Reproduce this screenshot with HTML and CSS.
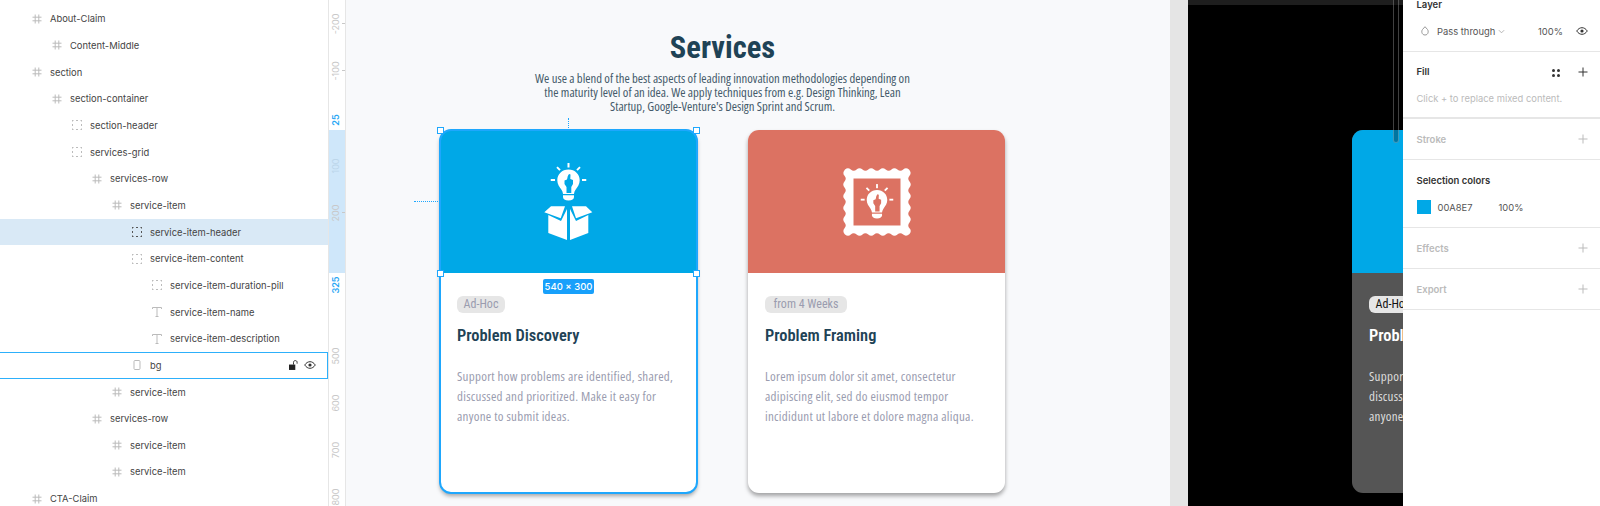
FILE: index.html
```html
<!DOCTYPE html>
<html>
<head lang="en">
    <meta charset="UTF-8">
    <title>Services</title>
    <link rel="stylesheet" href="styles.css">
</head>
<body>
<svg class="defs" width="0" height="0">
    <symbol id="i-frame" viewBox="0 0 10 10">
        <path d="M3.2 .5V9.5M6.8 .5V9.5M.5 3.2H9.5M.5 6.8H9.5" fill="none" stroke="currentColor"/>
    </symbol>
    <symbol id="i-group" viewBox="0 0 10 10">
        <path d="M.5 0V1.5M0 .5H1.5M4 .5H6M8.5 .5H10M9.5 0V1.5M.5 4V6M9.5 4V6M.5 8.5V10M0 9.5H1.5M4 9.5H6M8.5 9.5H10M9.5 8.5V10" fill="none" stroke="currentColor"/>
    </symbol>
    <symbol id="i-text" viewBox="0 0 10 10">
        <path d="M.5 2V.5H9.5V2M5 .5V9.5M3.5 9.5H6.5" fill="none" stroke="currentColor"/>
    </symbol>
    <symbol id="i-rect" viewBox="0 0 10 10">
        <rect x="2" y=".5" width="6" height="9" rx="1" fill="none" stroke="currentColor"/>
    </symbol>
    <symbol id="i-eye" viewBox="0 0 12 8">
        <path d="M.7 4C2.2 1.8 4 .7 6 .7S9.8 1.8 11.3 4C9.8 6.2 8 7.3 6 7.3S2.2 6.2 .7 4Z" fill="none" stroke="currentColor"/>
        <circle cx="6" cy="4" r="1.6" fill="currentColor"/>
    </symbol>
    <symbol id="i-plus" viewBox="0 0 10 10">
        <path d="M5 .5V9.5M.5 5H9.5" fill="none" stroke="currentColor"/>
    </symbol>
    <symbol id="i-bulb" viewBox="0 0 36 38">
        <g fill="#fff">
            <path d="M18 6.500C11.500 6.500 6.800 11.300 6.800 17.300C6.800 21.500 9 23.800 10.800 26.500C12 28.300 12.300 29.500 12.500 31H23.500C23.700 29.500 24 28.300 25.200 26.500C27 23.800 29.200 21.500 29.200 17.300C29.200 11.300 24.500 6.500 18 6.500Z"/>
            <path d="M12.500 32.300H23.500V34C23.500 36 21.500 37.500 18 37.500S12.500 36 12.500 34Z"/>
            <rect x="17" y="0" width="2" height="4.500"/>
            <rect x="0" y="16" width="4.500" height="2"/>
            <rect x="31.500" y="16" width="4.500" height="2"/>
            <path d="M5.800 4.800L7.200 3.400L10.200 6.400L8.800 7.800Z"/>
            <path d="M30.200 4.800L28.800 3.400L25.800 6.400L27.200 7.800Z"/>
        </g>
        <path d="M18.500 11L20 11.500L19.800 16L22.500 17V21L20.800 24V30H16V24L14 21V17.500L16.500 16.500L17.300 13Z" fill="currentColor"/>
    </symbol>
</svg>

<div class="layers">
    <div class="layer d1"><svg class="ico"><use href="#i-frame"/></svg>About-Claim</div>
    <div class="layer d2"><svg class="ico"><use href="#i-frame"/></svg>Content-Middle</div>
    <div class="layer d1"><svg class="ico"><use href="#i-frame"/></svg>section</div>
    <div class="layer d2"><svg class="ico"><use href="#i-frame"/></svg>section-container</div>
    <div class="layer d3"><svg class="ico"><use href="#i-group"/></svg>section-header</div>
    <div class="layer d3"><svg class="ico"><use href="#i-group"/></svg>services-grid</div>
    <div class="layer d4"><svg class="ico"><use href="#i-frame"/></svg>services-row</div>
    <div class="layer d5"><svg class="ico"><use href="#i-frame"/></svg>service-item</div>
    <div class="layer d6 selected"><svg class="ico"><use href="#i-group"/></svg>service-item-header</div>
    <div class="layer d6"><svg class="ico"><use href="#i-group"/></svg>service-item-content</div>
    <div class="layer d7"><svg class="ico"><use href="#i-group"/></svg>service-item-duration-pill</div>
    <div class="layer d7"><svg class="ico"><use href="#i-text"/></svg>service-item-name</div>
    <div class="layer d7"><svg class="ico"><use href="#i-text"/></svg>service-item-description</div>
    <div class="layer d6 hovered">
        <svg class="ico"><use href="#i-rect"/></svg>bg
        <span class="layer-tools">
            <svg class="lock" viewBox="0 0 10 11"><path d="M0 5H7V11H0Z" fill="#222"/><path d="M5 5V2.500C5 1.300 5.900 .6 7 .6S9 1.300 9 2.500V4" fill="none" stroke="#222"/></svg>
            <svg class="eye"><use href="#i-eye"/></svg>
        </span>
    </div>
    <div class="layer d5"><svg class="ico"><use href="#i-frame"/></svg>service-item</div>
    <div class="layer d4"><svg class="ico"><use href="#i-frame"/></svg>services-row</div>
    <div class="layer d5"><svg class="ico"><use href="#i-frame"/></svg>service-item</div>
    <div class="layer d5"><svg class="ico"><use href="#i-frame"/></svg>service-item</div>
    <div class="layer d1"><svg class="ico"><use href="#i-frame"/></svg>CTA-Claim</div>
</div>

<div class="ruler">
    <div class="ruler-band"></div>
    <span class="mark tick" style="top:24px">-200</span>
    <span class="mark tick" style="top:71px">-100</span>
    <span class="mark on" style="top:120px">25</span>
    <span class="mark faded" style="top:166px">100</span>
    <span class="mark tick" style="top:213px">200</span>
    <span class="mark on" style="top:285px">325</span>
    <span class="mark" style="top:356px">500</span>
    <span class="mark" style="top:403px">600</span>
    <span class="mark" style="top:450px">700</span>
    <span class="mark" style="top:497px">800</span>
</div>

<div class="canvas">
    <div class="section">
        <div class="section-header">
            <h1>Services</h1>
            <p>We use a blend of the best aspects of leading innovation methodologies depending on<br>the maturity level of an idea. We apply techniques from e.g. Design Thinking, Lean<br>Startup, Google-Venture's Design Sprint and Scrum.</p>
        </div>
        <div class="services-row">
            <div class="card active">
                <div class="card-head blue">
                    <svg class="icon-box" viewBox="0 0 77 100">
                        <use href="#i-bulb" x="20.500" y="13" width="36" height="38" class="hand-blue"/>
                        <path fill="#fff" d="M14.300 62.300L21 56.300H35L30.700 68.300ZM42 56.300H56L62.300 62.300L46 68.300ZM18.300 65L31 71L37 59V90L18.300 83ZM58.300 65L46 71L40 59V90L58.300 83Z"/>
                    </svg>
                </div>
                <div class="card-body">
                    <span class="pill">Ad-Hoc</span>
                    <h2>Problem Discovery</h2>
                    <p>Support how problems are identified, shared,<br>discussed and prioritized. Make it easy for<br>anyone to submit ideas.</p>
                </div>
                <i class="handle tl"></i><i class="handle tr"></i><i class="handle bl"></i><i class="handle br"></i>
                <span class="size-tag">540 × 300</span>
                <i class="gap-v"></i><i class="gap-h"></i>
            </div>
            <div class="card">
                <div class="card-head coral">
                    <svg class="icon-stamp" viewBox="0 0 70 70">
                        <path fill="#fff" fill-rule="evenodd" d="M3 2.500Q5.900 0 8.800 2.500T14.600 2.500T20.500 2.500T26.300 2.500T32.100 2.500T37.900 2.500T43.700 2.500T49.500 2.500T55.400 2.500T61.200 2.500T67 2.500Q70 5.900 67.500 8.800T67.500 14.600T67.500 20.500T67.500 26.300T67.500 32.100T67.500 37.900T67.500 43.700T67.500 49.500T67.500 55.400T67.500 61.200T67.500 67Q64.100 70 61.200 67.500T55.400 67.500T49.500 67.500T43.700 67.500T37.900 67.500T32.100 67.500T26.300 67.500T20.500 67.500T14.600 67.500T8.800 67.500T3 67.500Q0 64.100 2.500 61.200T2.500 55.400T2.500 49.500T2.500 43.700T2.500 37.900T2.500 32.100T2.500 26.300T2.500 20.500T2.500 14.600T2.500 8.800T3 2.500ZM11.500 11.500V58.500H58.500V11.500Z"/>
                        <use href="#i-bulb" x="18.500" y="17" width="33" height="35" class="hand-coral"/>
                    </svg>
                </div>
                <div class="card-body">
                    <span class="pill wide">from 4 Weeks</span>
                    <h2>Problem Framing</h2>
                    <p>Lorem ipsum dolor sit amet, consectetur<br>adipiscing elit, sed do eiusmod tempor<br>incididunt ut labore et dolore magna aliqua.</p>
                </div>
            </div>
        </div>
    </div>
</div>

<div class="gutter"></div>

<div class="preview">
    <div class="preview-top"></div>
    <div class="mini-card">
        <div class="mini-head"></div>
        <div class="mini-body">
            <span class="mini-pill">Ad-Hoc</span>
            <h3>Problem</h3>
            <p>Support<br>discussed<br>anyone</p>
        </div>
    </div>
    <div class="scroll-line"></div>
</div>

<div class="inspector">
    <div class="panel">
        <div class="panel-head"><b>Layer</b></div>
        <div class="panel-row first">
            <svg class="drop" viewBox="0 0 8 10"><path d="M4 .7L1.500 3.500C.2 5 .6 9 4 9S7.800 5 6.500 3.500Z" fill="none" stroke="#999"/></svg>
            <span class="blend">Pass through</span>
            <svg class="chev" viewBox="0 0 8 5"><path d="M1 1L4 4L7 1" fill="none" stroke="#aaa"/></svg>
            <span class="pct">100%</span>
            <svg class="eye"><use href="#i-eye"/></svg>
        </div>
    </div>
    <div class="panel thick">
        <div class="panel-head"><b>Fill</b>
            <span class="dots"><i></i><i></i><i></i><i></i></span>
            <svg class="plus"><use href="#i-plus"/></svg>
        </div>
        <div class="panel-row hint">Click + to replace mixed content.</div>
    </div>
    <div class="panel">
        <div class="panel-head off"><b>Stroke</b><svg class="plus"><use href="#i-plus"/></svg></div>
    </div>
    <div class="panel">
        <div class="panel-head"><b>Selection colors</b></div>
        <div class="panel-row">
            <span class="swatch"></span>
            <span class="hex">00A8E7</span>
            <span>100%</span>
        </div>
    </div>
    <div class="panel">
        <div class="panel-head off"><b>Effects</b><svg class="plus"><use href="#i-plus"/></svg></div>
    </div>
    <div class="panel">
        <div class="panel-head off"><b>Export</b><svg class="plus"><use href="#i-plus"/></svg></div>
    </div>
</div>
</body>
</html>
```

FILE: styles.css
```css
* {
    margin: 0;
    padding: 0;
    box-sizing: border-box;
}

html, body {
    height: 506px;
    overflow: hidden;
}

body {
    display: flex;
    background-color: #fff;
    font-family: Inter, "Liberation Sans", sans-serif;
    font-size: 9.4px;
    color: #444;
}

.defs {
    position: absolute;
}

/* layers */
.layers {
    width: 328px;
    flex: none;
    padding-top: 5.5px;
    background-color: #fff;
}

.layer {
    height: 26.67px;
    display: flex;
    align-items: center;
}

.d1 { padding-left: 32px; }
.d2 { padding-left: 52px; }
.d3 { padding-left: 72px; }
.d4 { padding-left: 92px; }
.d5 { padding-left: 112px; }
.d6 { padding-left: 132px; }
.d7 { padding-left: 152px; }

.ico {
    width: 10px;
    height: 10px;
    margin-right: 8px;
    color: #bbb;
    flex: none;
}

.selected {
    background-color: #d9e9f6;
}

.selected .ico {
    color: #555;
}

.hovered {
    border: 1.5px solid #2db0fb;
    border-left-width: 0;
}

.layer-tools {
    margin-left: auto;
    display: flex;
    align-items: center;
    gap: 6px;
    padding-right: 11px;
}

.lock {
    width: 9px;
    height: 10px;
}

.eye {
    width: 12px;
    height: 8px;
    color: #333;
    flex: none;
}

/* ruler */
.ruler {
    width: 18px;
    flex: none;
    position: relative;
    background-color: #fff;
    border-left: 1px solid #e6e6e6;
    border-right: 1px solid #e6e6e6;
    overflow: hidden;
}

.ruler-band {
    position: absolute;
    top: 130px;
    left: 0;
    right: 0;
    height: 143px;
    background-color: #cfe7fa;
}

.mark {
    position: absolute;
    left: -8px;
    width: 30px;
    height: 12px;
    margin-top: -6px;
    text-align: center;
    line-height: 12px;
    transform: rotate(-90deg);
    font-size: 9px;
    color: #c8c8c8;
}

.tick::after {
    content: "";
    position: absolute;
    left: 15px;
    top: 12px;
    width: 1px;
    height: 3px;
    background-color: #c8c8c8;
}

.mark.on {
    color: #2aa7f5;
    font-weight: 600;
}

.mark.faded {
    color: #bcd6ea;
}

/* canvas */
.canvas {
    width: 824px;
    flex: none;
    background-color: #f8f9fb;
    padding-left: 94px;
    font-family: Roboto, sans-serif;
    font-stretch: 75%;
}

.section {
    width: 565px;
}

.section-header {
    text-align: center;
    padding-top: 30px;
    height: 130px;
}

.section-header h1 {
    font-size: 30.5px;
    line-height: 36px;
    font-weight: 700;
    color: #1f4356;
}

.section-header p {
    font-family: "Open Sans", sans-serif;
    margin-top: 5px;
    font-size: 12.7px;
    line-height: 14px;
    color: #44596a;
}

.services-row {
    display: flex;
    justify-content: space-between;
}

.card {
    width: 257px;
    height: 363px;
    position: relative;
    background-color: #fff;
    border-radius: 11px;
    box-shadow: 0 3px 4px rgba(0, 0, 0, .35);
}

.card.active {
    outline: 2px solid #1ea7fd;
    outline-offset: -1px;
}

.card-head {
    height: 143px;
    display: flex;
    align-items: center;
    justify-content: center;
    border-radius: 11px 11px 0 0;
}

.blue { background-color: #00a8e7; }
.coral { background-color: #dc7262; }

.hand-blue { color: #00a8e7; }
.hand-coral { color: #dc7262; }

.icon-box {
    width: 77px;
    height: 100px;
    margin-top: -3px;
}

.icon-stamp {
    width: 70px;
    height: 70px;
}

.card-body {
    padding: 23px 17px 0;
}

.pill {
    display: block;
    width: 48px;
    height: 17px;
    border-radius: 6px;
    background-color: #e6e6e6;
    color: #9a9caf;
    font-size: 12px;
    line-height: 17px;
    text-align: center;
}

.pill.wide {
    width: 82px;
}

.card-body h2 {
    margin-top: 13px;
    font-size: 16.4px;
    line-height: 20px;
    font-weight: 600;
    color: #1f4356;
}

.card-body p {
    font-family: "Open Sans", sans-serif;
    margin-top: 20px;
    font-size: 13px;
    letter-spacing: .27px;
    line-height: 20px;
    color: #9a9caf;
    white-space: nowrap;
}

.handle {
    position: absolute;
    width: 7px;
    height: 7px;
    background-color: #fff;
    border: 1px solid #1ea7fd;
}

.tl { left: -3px; top: -3px; }
.tr { right: -3px; top: -3px; }
.bl { left: -3px; top: 140px; }
.br { right: -3px; top: 140px; }

.size-tag {
    position: absolute;
    left: 103px;
    top: 149px;
    width: 51px;
    height: 15px;
    border-radius: 2px;
    background-color: #18a0fb;
    color: #fff;
    font-family: Inter, sans-serif;
    font-size: 9.5px;
    font-weight: 500;
    line-height: 15px;
    text-align: center;
}

.gap-v {
    position: absolute;
    left: 128px;
    top: -12px;
    height: 10px;
    border-left: 1px dotted #1ea7fd;
}

.gap-h {
    position: absolute;
    left: -26px;
    top: 71px;
    width: 24px;
    border-top: 1px dotted #1ea7fd;
}

.gutter {
    width: 18px;
    flex: none;
    background-color: #e5e5e5;
}

/* preview */
.preview {
    width: 215px;
    flex: none;
    position: relative;
    overflow: hidden;
    background-color: #000;
    padding: 130px 0 0 164px;
    font-family: Roboto, sans-serif;
    font-stretch: 75%;
}

.preview-top {
    position: absolute;
    left: 0;
    top: 0;
    width: 100%;
    height: 5px;
    background-color: #1e1e1e;
}

.mini-card {
    width: 51px;
    height: 363px;
    border-radius: 11px 0 0 11px;
    background-color: #555;
    overflow: hidden;
}

.mini-head {
    height: 143px;
    background-color: #00a8e7;
}

.mini-body {
    padding: 23px 0 0 17px;
    color: #fff;
    white-space: nowrap;
}

.mini-pill {
    display: block;
    width: 48px;
    height: 17px;
    border-radius: 6px;
    background-color: #e6e6e6;
    color: #111;
    font-size: 12px;
    line-height: 17px;
    text-align: center;
}

.mini-body h3 {
    margin-top: 13px;
    font-size: 16.4px;
    line-height: 20px;
    font-weight: 600;
}

.mini-body p {
    font-family: "Open Sans", sans-serif;
    margin-top: 20px;
    font-size: 13px;
    letter-spacing: .27px;
    line-height: 20px;
    color: #ddd;
}

.scroll-line {
    position: absolute;
    left: 205px;
    top: 0;
    width: 6px;
    height: 143px;
    border: 1px solid rgba(255, 255, 255, .25);
    border-top: 0;
    border-radius: 0 0 3px 3px;
    background-color: rgba(0, 0, 0, .3);
}

/* inspector */
.inspector {
    flex: 1;
    min-width: 0;
    margin-top: -16px;
    position: relative;
    background-color: #fff;
    color: #555;
}

.panel {
    border-bottom: 1px solid #e6e6e6;
    padding: 0 12px 0 13.5px;
}

.panel.thick {
    border-bottom-width: 2px;
}

.panel-head {
    height: 40px;
    display: flex;
    align-items: center;
    justify-content: space-between;
    position: relative;
    color: #333;
}

.panel-head b {
    font-size: 9.5px;
    font-weight: 600;
}

.panel-head.off {
    color: #bbb;
}

.plus {
    width: 10px;
    height: 10px;
    color: #333;
}

.off .plus {
    color: #bbb;
}

.dots {
    position: absolute;
    right: 28px;
    top: 17px;
    display: grid;
    grid-template-columns: 3px 3px;
    gap: 2px 2px;
}

.dots i {
    width: 3px;
    height: 3px;
    background-color: #333;
    border-radius: 50%;
}

.panel-row {
    height: 14px;
    margin-bottom: 13px;
    display: flex;
    align-items: center;
    white-space: nowrap;
}

.panel-row.first {
    margin-bottom: 12.5px;
}

.panel-row.hint {
    color: #bbb;
    margin-bottom: 11.5px;
}

.drop {
    width: 8px;
    height: 10px;
    margin-left: 4px;
    margin-right: 8.5px;
    flex: none;
}

.blend {
    width: 57px;
    margin-right: 4px;
}

.chev {
    width: 7px;
    height: 5px;
    flex: none;
}

.pct {
    margin-left: 33px;
    width: 38px;
}

.swatch {
    width: 14px;
    height: 14px;
    margin-right: 7px;
    background-color: #00a8e7;
}

.hex {
    width: 61px;
}
```
